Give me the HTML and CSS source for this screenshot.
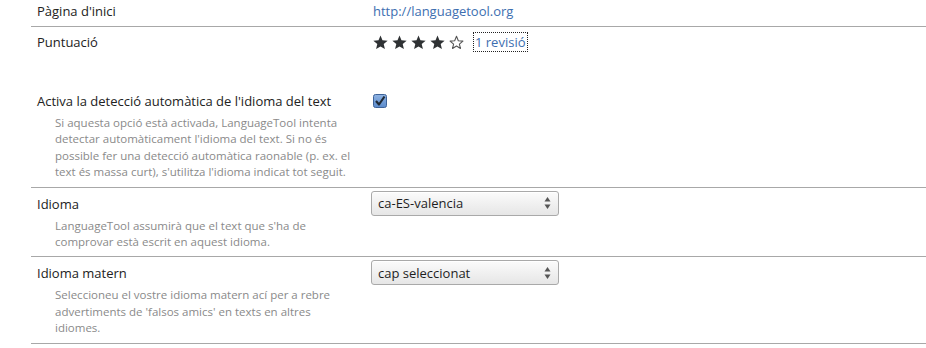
FILE: index.html
```html
<!DOCTYPE html>
<html lang="ca">
<head>
<meta charset="utf-8">
<title>LanguageTool</title>
<link rel="stylesheet" href="styles.css">
</head>
<body>
<div class="settings">
  <div class="row row-first">
    <div class="label-cell"><div class="label">Pàgina d'inici</div></div>
    <div class="value-cell"><a class="link" href="#">http://languagetool.org</a></div>
  </div>
  <div class="row row-rating">
    <div class="label-cell"><div class="label">Puntuació</div></div>
    <div class="value-cell rating">
      <span class="stars">
        <svg class="star" viewBox="0 0 14 14"><polygon class="full" points="7,0.5 8.85,4.95 13.66,5.34 10,8.47 11.11,13.16 7,10.65 2.89,13.16 4,8.47 0.34,5.34 5.15,4.95"/></svg>
        <svg class="star" viewBox="0 0 14 14"><polygon class="full" points="7,0.5 8.85,4.95 13.66,5.34 10,8.47 11.11,13.16 7,10.65 2.89,13.16 4,8.47 0.34,5.34 5.15,4.95"/></svg>
        <svg class="star" viewBox="0 0 14 14"><polygon class="full" points="7,0.5 8.85,4.95 13.66,5.34 10,8.47 11.11,13.16 7,10.65 2.89,13.16 4,8.47 0.34,5.34 5.15,4.95"/></svg>
        <svg class="star" viewBox="0 0 14 14"><polygon class="full" points="7,0.5 8.85,4.95 13.66,5.34 10,8.47 11.11,13.16 7,10.65 2.89,13.16 4,8.47 0.34,5.34 5.15,4.95"/></svg>
        <svg class="star" viewBox="0 0 14 14"><polygon class="empty" points="7,1.2 8.7,5.3 13,5.7 9.7,8.5 10.7,12.6 7,10.3 3.3,12.6 4.3,8.5 1,5.7 5.3,5.3"/></svg>
      </span>
      <a class="link reviews" href="#">1 revisió</a>
    </div>
  </div>
  <div class="row">
    <div class="label-cell">
      <div class="label">Activa la detecció automàtica de l'idioma del text</div>
      <div class="desc">Si aquesta opció està activada, LanguageTool intenta detectar automàticament l'idioma del text. Si no és possible fer una detecció automàtica raonable (p. ex. el text és massa curt), s'utilitza l'idioma indicat tot seguit.</div>
    </div>
    <div class="value-cell">
      <svg class="checkbox" viewBox="0 0 14 14">
        <defs>
          <linearGradient id="cbg" x1="0" y1="0" x2="0" y2="1">
            <stop offset="0" stop-color="#8fb3e3"/>
            <stop offset="1" stop-color="#5b8bcc"/>
          </linearGradient>
        </defs>
        <rect x="0.5" y="0.5" width="13" height="13" rx="2" fill="url(#cbg)" stroke="#3d6298"/>
        <path d="M3 7 L6 10.5 L11.5 2.5" fill="none" stroke="#1f2a36" stroke-width="2.2" stroke-linejoin="round"/>
      </svg>
    </div>
  </div>
  <div class="row">
    <div class="label-cell">
      <div class="label">Idioma</div>
      <div class="desc">LanguageTool assumirà que el text que s'ha de comprovar està escrit en aquest idioma.</div>
    </div>
    <div class="value-cell">
      <div class="select">
        <span class="select-text">ca-ES-valencia</span>
        <svg class="arrows" viewBox="0 0 7 14"><polygon points="3.5,1 6.5,5.5 0.5,5.5"/><polygon points="0.5,8.5 6.5,8.5 3.5,13"/></svg>
      </div>
    </div>
  </div>
  <div class="row">
    <div class="label-cell">
      <div class="label">Idioma matern</div>
      <div class="desc">Seleccioneu el vostre idioma matern ací per a rebre advertiments de 'falsos amics' en texts en altres idiomes.</div>
    </div>
    <div class="value-cell">
      <div class="select">
        <span class="select-text">cap seleccionat</span>
        <svg class="arrows" viewBox="0 0 7 14"><polygon points="3.5,1 6.5,5.5 0.5,5.5"/><polygon points="0.5,8.5 6.5,8.5 3.5,13"/></svg>
      </div>
    </div>
  </div>
</div>
</body>
</html>
```
FILE: styles.css
```css
html, body {
  margin: 0;
  padding: 0;
  background: #ffffff;
}

body {
  font-family: "Open Sans", "Noto Sans", "DejaVu Sans", sans-serif;
  font-size: 13px;
  color: #222222;
}

.settings {
  margin-left: 31px;
}

.row {
  display: grid;
  grid-template-columns: 336px 1fr;
  padding: 7px 0 6px 6px;
  border-bottom: 1px solid #a8a8a8;
}

.row-first {
  padding-top: 2px;
  padding-bottom: 6px;
}

.row-rating {
  padding-top: 6px;
  padding-bottom: 34px;
  border-bottom: none;
}

.label {
  line-height: 18px;
  color: #222222;
}

.desc {
  margin-top: 5px;
  padding-left: 18px;
  width: 296px;
  font-size: 11.5px;
  line-height: 16.4px;
  color: #8a8a8a;
}

.value-cell {
  line-height: 18px;
}

.link {
  color: #3d6eb0;
  text-decoration: none;
}

.rating {
  display: flex;
  align-items: center;
  height: 18px;
}

.stars {
  display: flex;
  gap: 4px;
}

.star {
  width: 15px;
  height: 15px;
  display: block;
}

.star .full {
  fill: #2f3234;
}

.star .empty {
  fill: none;
  stroke: #555555;
  stroke-width: 1;
  stroke-linejoin: round;
}

.reviews {
  margin-left: 10px;
  outline: 1px dotted #222222;
  outline-offset: 0;
  padding: 0 1px;
  line-height: 18px;
}

.checkbox {
  display: block;
  width: 14px;
  height: 14px;
  margin-top: 2px;
}

.select {
  display: flex;
  align-items: center;
  justify-content: space-between;
  width: 188px;
  height: 25px;
  box-sizing: border-box;
  margin: -4px 0 0 -2px;
  padding: 0 6px 0 6px;
  border: 1px solid #a9a9a9;
  border-radius: 3px;
  background: linear-gradient(#fbfbfb, #e6e6e6);
  box-shadow: inset 0 1px 0 #ffffff;
  color: #1e1e1e;
  font-size: 13px;
}

.arrows {
  width: 7px;
  height: 14px;
  fill: #555555;
  margin-right: 1px;
}
```
